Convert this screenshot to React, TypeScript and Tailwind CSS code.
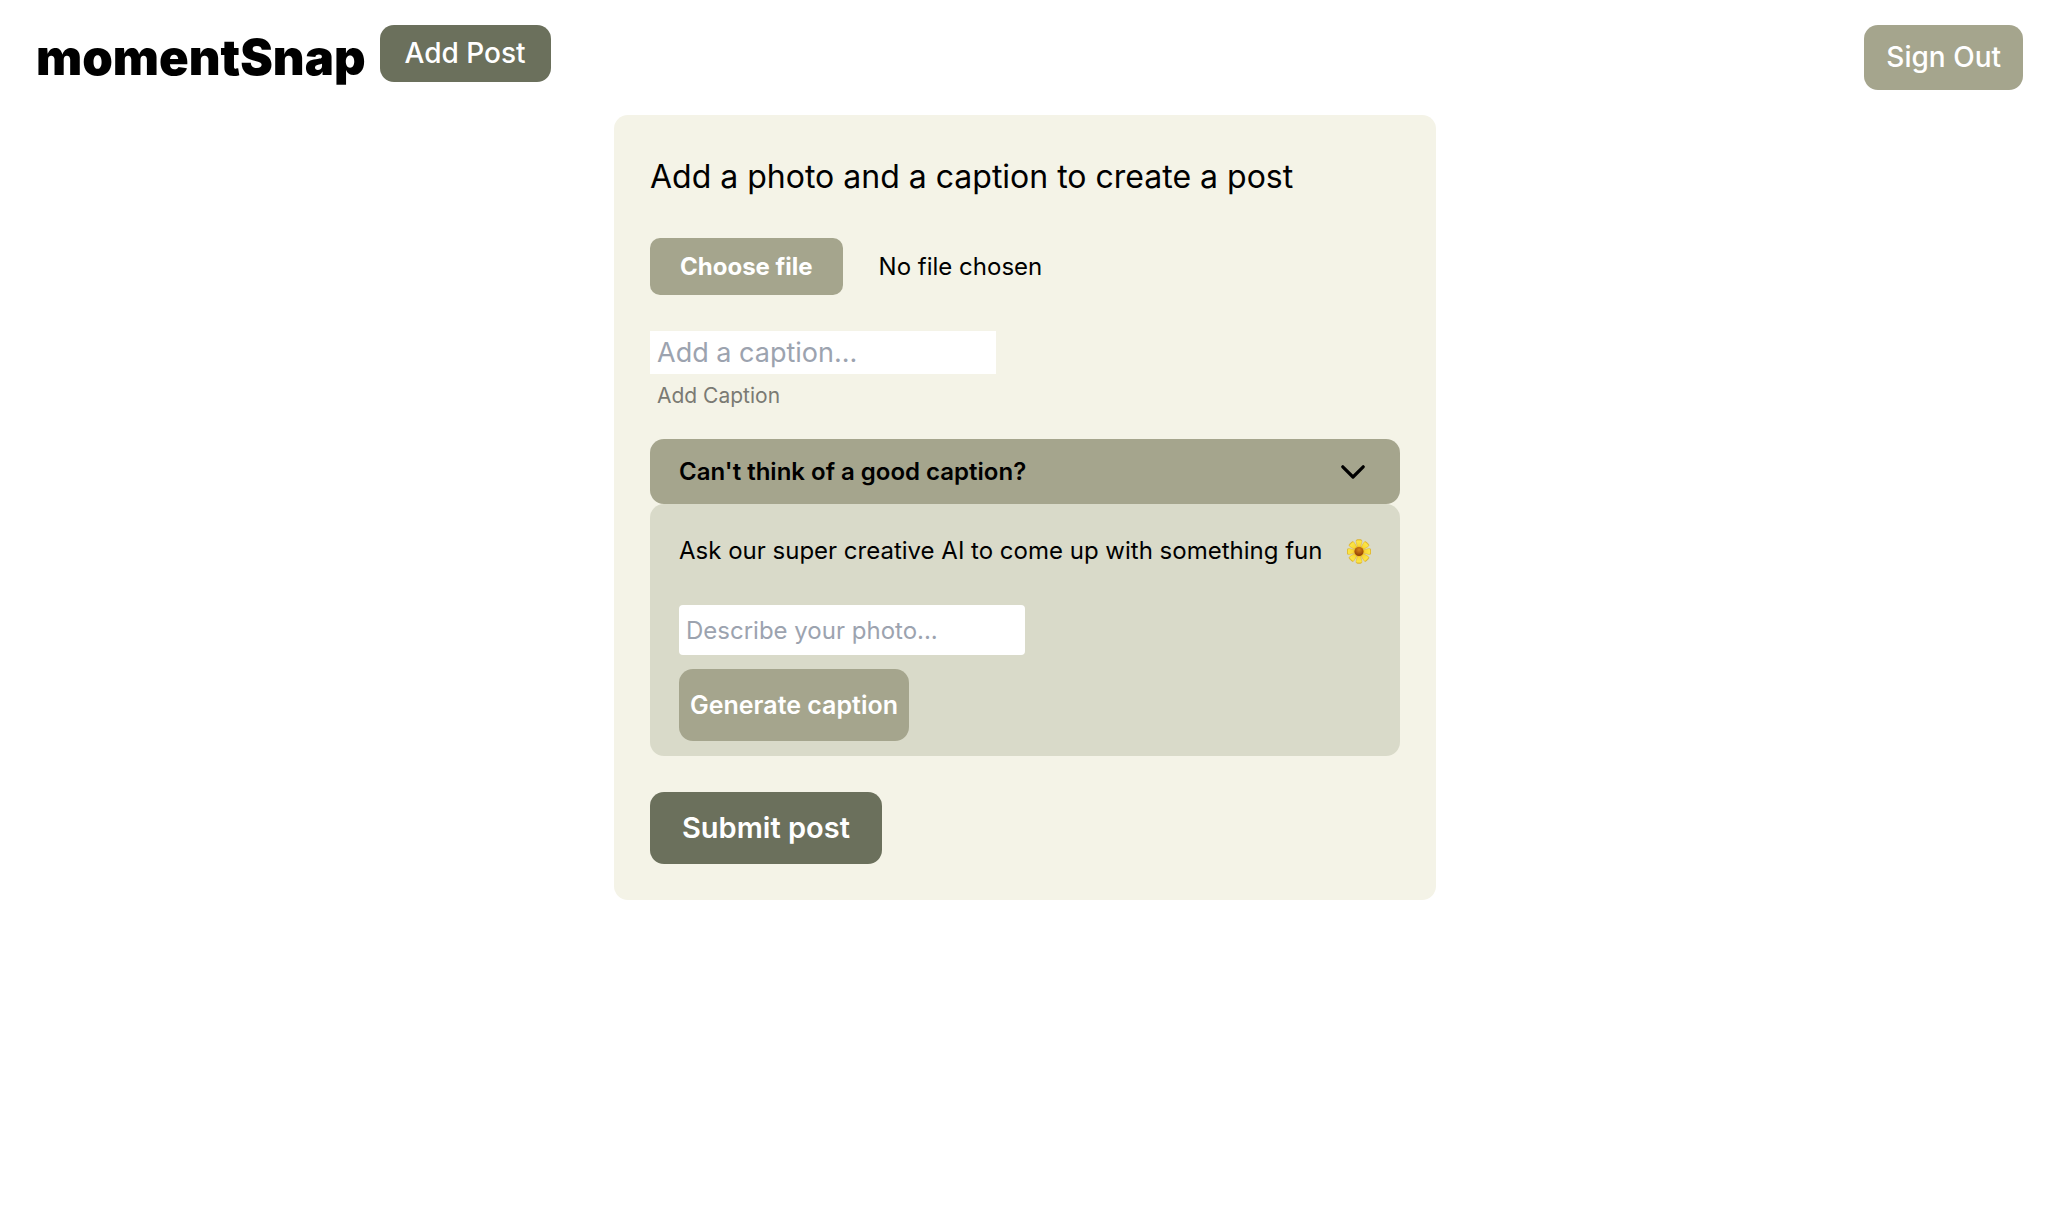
import { useState } from "react";

const petals = [45, 135, 225, 315, 0, 90, 180, 270];

function Blossom() {
  return (
    <svg className="h-[25px] w-[24px] shrink-0" viewBox="-12 -12.5 24 25" role="img" aria-label="blossom">
      <defs>
        <radialGradient id="petal" gradientUnits="userSpaceOnUse" cx="0" cy="0" r="12">
          <stop offset="0.3" stopColor="#e8a80c" />
          <stop offset="0.5" stopColor="#f8d834" />
          <stop offset="0.88" stopColor="#fbe646" />
          <stop offset="1" stopColor="#e2b41e" />
        </radialGradient>
        <radialGradient id="heart" cx="0.5" cy="0.3" r="0.7">
          <stop offset="0" stopColor="#d88618" />
          <stop offset="1" stopColor="#8f3d04" />
        </radialGradient>
      </defs>
      {petals.map((angle) => (
        <path
          key={angle}
          transform={`rotate(${angle})`}
          d="M-1 -2 L-3 -9.8 Q-3.2 -12 -1.4 -11.9 L1.4 -11.9 Q3.2 -12 3 -9.8 L1 -2 Z"
          fill="url(#petal)"
          stroke="#dca81a"
          strokeWidth="0.4"
        />
      ))}
      <circle r="4.5" fill="url(#heart)" />
    </svg>
  );
}

function Header() {
  return (
    <header className="flex items-start justify-between pl-[36px] pr-[27px] pt-[25px]">
      <div className="flex items-start gap-[14px]">
        <a href="#home" className="text-[49px] font-black leading-[65px]">
          momentSnap
        </a>
        <button type="button" className="rounded-[14px] bg-[#6b705c] px-[25px] text-[28px] font-medium leading-[57px] text-white">
          Add Post
        </button>
      </div>
      <button type="button" className="rounded-[14px] bg-[#a5a58d] px-[22px] text-[28px] font-medium leading-[65px] text-white">
        Sign Out
      </button>
    </header>
  );
}

function CaptionHelper() {
  const [open, setOpen] = useState(true);
  return (
    <section>
      <button
        type="button"
        aria-expanded={open}
        onClick={() => setOpen(!open)}
        className="flex w-full items-center justify-between rounded-[14px] bg-[#a5a58d] pl-[29px] pr-[35px] text-[24px] font-semibold leading-[65px]"
      >
        Can't think of a good caption?
        <svg className="h-[14px] w-[24px]" viewBox="0 0 24 14" fill="none" stroke="currentColor" strokeWidth="3.2" strokeLinecap="round" strokeLinejoin="round" aria-hidden="true">
          <path d="M1.8 1.8 12 12 22.2 1.8" />
        </svg>
      </button>
      {open && (
        <div className="flex flex-col items-start rounded-[14px] bg-[#d9dac9] px-[29px] pb-[15px] pt-[29px]">
          <p className="flex w-full items-center justify-between text-[24px] leading-[36px]">
            Ask our super creative AI to come up with something fun
            <Blossom />
          </p>
          <input
            type="text"
            aria-label="Describe your photo"
            placeholder="Describe your photo..."
            className="mt-[36px] h-[50px] w-full max-w-[346px] rounded-[4px] bg-white px-[7px] text-[24px] placeholder:text-[#9ca3af]"
          />
          <button type="button" className="mt-[14px] rounded-[14px] bg-[#a5a58d] px-[11px] text-[25px] font-semibold leading-[72px] text-white">
            Generate caption
          </button>
        </div>
      )}
    </section>
  );
}

export default function App() {
  const [fileName, setFileName] = useState("No file chosen");
  return (
    <div className="min-h-screen bg-white font-['Inter',sans-serif] text-black">
      <Header />
      <main className="mx-auto mt-[25px] w-full max-w-[822px] rounded-[14px] bg-[#f4f3e7] p-[36px]">
        <form onSubmit={(e) => e.preventDefault()} className="flex flex-col">
          <h1 className="text-[32px] leading-[51px]">Add a photo and a caption to create a post</h1>

          <div className="relative mt-[36px] flex items-center gap-[36px]">
            <input
              id="photo"
              type="file"
              className="sr-only"
              onChange={(e) => setFileName(e.target.files?.[0]?.name ?? "No file chosen")}
            />
            <label htmlFor="photo" className="cursor-pointer rounded-[10px] bg-[#a5a58d] px-[30px] text-[24px] font-bold leading-[57px] text-white">
              Choose file
            </label>
            <span className="text-[24px]">{fileName}</span>
          </div>

          <input
            id="caption"
            type="text"
            placeholder="Add a caption..."
            className="mt-[36px] h-[43px] w-full max-w-[346px] bg-white px-[7px] text-[27px] placeholder:text-[#9ca3af]"
          />
          <label htmlFor="caption" className="mb-[29px] mt-[7px] px-[7px] text-[21px] leading-[29px] text-[#7a7a73]">
            Add Caption
          </label>

          <CaptionHelper />

          <button type="submit" className="mt-[36px] self-start rounded-[14px] bg-[#6b705c] px-[32px] text-[29px] font-semibold leading-[72px] text-white">
            Submit post
          </button>
        </form>
      </main>
    </div>
  );
}
